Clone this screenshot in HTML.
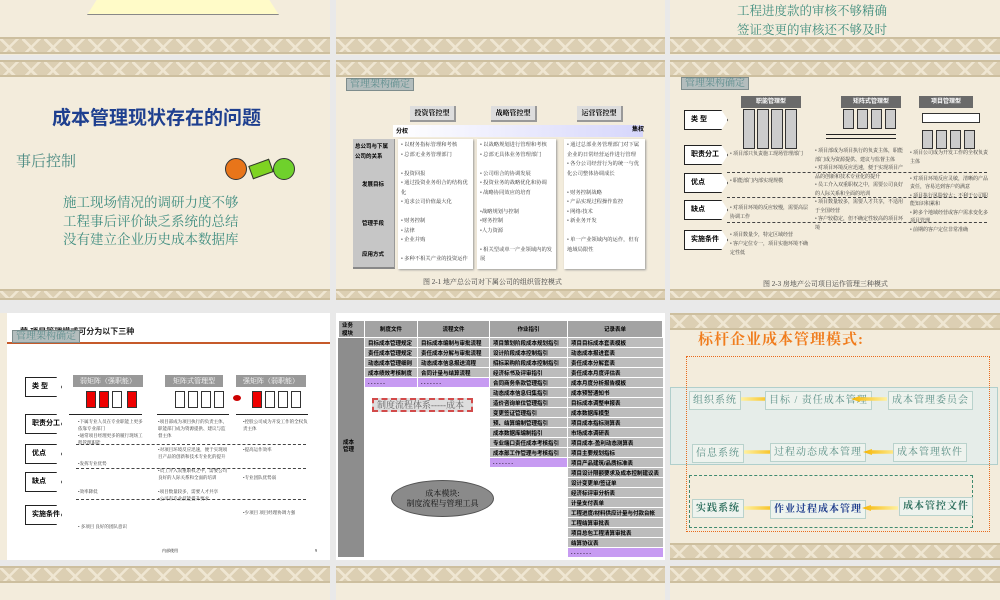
<!DOCTYPE html>
<html><head><meta charset="utf-8">
<style>
*{margin:0;padding:0;box-sizing:border-box}
body{width:1000px;height:600px;position:relative;overflow:hidden;background:#e9e9e9;font-family:"Liberation Serif","Noto Serif CJK SC",serif}
.a{position:absolute}
.bg{background:#f3ecdc}
.band{position:absolute;height:17px;background-color:#dccfb3;
background-image:linear-gradient(135deg,transparent 40%,#efe6d2 40%,#efe6d2 50%,transparent 50%),linear-gradient(45deg,transparent 40%,#efe6d2 40%,#efe6d2 50%,transparent 50%);
background-size:22px 17px;border-top:2px solid #cdbf9f;border-bottom:2px solid #cdbf9f}
.s{font-family:"Liberation Sans","Noto Sans CJK SC",sans-serif}
.lbl{position:absolute;background:#b3bdbd;border:1px solid #7e8c8c;color:#5f8e8e;font-size:10px;line-height:11px;padding:0 3px;white-space:nowrap}
.t7{font-size:6px;line-height:9.5px;color:#333}
.hdr{position:absolute;background:#ddd;border-bottom:2px solid #999;border-right:2px solid #999;font-size:7px;font-weight:bold;text-align:center;line-height:14px}
.arrow{position:absolute;background:#fff;border:1.5px solid #222;font-size:7px;font-weight:bold;line-height:17px;padding-left:6px;width:44px;height:20px;clip-path:polygon(0 0,85% 0,100% 50%,85% 100%,0 100%)}
.dash{position:absolute;border-top:1px dashed #444;height:0}
table{border-collapse:collapse}
.tb td{border:1px solid #fff;font-size:5.5px;font-weight:bold;height:10px;padding:0 3px;white-space:nowrap;font-family:"Liberation Sans","Noto Sans CJK SC",sans-serif}
.g{background:#bcbcbc}.p{background:#c79bf2}.w{background:#fff;border:none!important}
.box{position:absolute;border:1px solid #b9d2cc;background:#eef3ee;color:#5a8f86;font-size:10px;line-height:17px;padding:0 3px;letter-spacing:1px;white-space:nowrap}
.yar{position:absolute;height:6px;width:36px;background:linear-gradient(90deg,#fff1a0,#f5b400);clip-path:polygon(0 20%,75% 20%,75% 0,100% 50%,75% 100%,75% 80%,0 80%)}
.yal{position:absolute;height:6px;width:36px;background:linear-gradient(270deg,#fff1a0,#f5b400);clip-path:polygon(100% 20%,25% 20%,25% 0,0 50%,25% 100%,25% 80%,100% 80%)}
</style></head><body>

<!-- Row 1 -->
<div class="a bg" style="left:0;top:0;width:330px;height:55px"></div>
<div class="a bg" style="left:336px;top:0;width:329px;height:55px"></div>
<div class="a bg" style="left:670px;top:0;width:330px;height:55px"></div>
<div class="a" style="left:87px;top:0;width:192px;height:15px;background:#fffbc8;border-bottom:1px solid #888;clip-path:polygon(5% 0,95% 0,100% 100%,0 100%)"></div>
<div class="a" style="left:737px;top:2px;font-size:12.5px;line-height:19px;color:#3f8d7d">工程进度款的审核不够精确<br>签证变更的审核还不够及时</div>
<div class="band" style="left:0;top:37px;width:330px"></div>
<div class="band" style="left:336px;top:37px;width:329px"></div>
<div class="band" style="left:670px;top:37px;width:330px"></div>

<!-- Row 2 col 1 -->
<div class="a bg" style="left:0;top:60px;width:330px;height:240px"></div>
<div class="band" style="left:0;top:60px;width:330px"></div>
<div class="band" style="left:0;top:289px;width:330px;height:11px"></div>
<div class="a s" style="left:52px;top:103px;font-size:19px;font-weight:bold;color:#1e3f8f">成本管理现状存在的问题</div>
<div class="a" style="left:16px;top:150px;font-size:15px;color:#4a8a82">事后控制</div>
<div class="a" style="left:63px;top:194px;font-size:13.5px;line-height:18.5px;color:#3f8d80">施工现场情况的调研力度不够<br>工程事后评价缺乏系统的总结<br>没有建立企业历史成本数据库</div>
<div class="a" style="left:225px;top:158px;width:22px;height:22px;border-radius:50%;background:#e8751a;border:1px solid #333"></div>
<div class="a" style="left:250px;top:162px;width:22px;height:14px;background:#7ed321;transform:rotate(-20deg);border:1px solid #333"></div>
<div class="a" style="left:273px;top:158px;width:22px;height:22px;border-radius:50%;background:#6fd12c;border:1px solid #333"></div>

<!-- Row 2 col 2 -->
<div class="a bg" style="left:336px;top:60px;width:329px;height:240px"></div>
<div class="band" style="left:336px;top:60px;width:329px"></div>
<div class="band" style="left:336px;top:289px;width:329px;height:11px"></div>
<div class="lbl" style="left:346px;top:78px">管理架构确定</div>
<div class="hdr" style="left:410px;top:106px;width:46px">投资管控型</div>
<div class="hdr" style="left:491px;top:106px;width:46px">战略管控型</div>
<div class="hdr" style="left:577px;top:106px;width:46px">运营管控型</div>
<div class="a" style="left:393px;top:125px;width:250px;height:12px;background:linear-gradient(90deg,#fff,#d6d6fb)"></div>
<div class="a s" style="left:396px;top:126px;font-size:6px;font-weight:bold">分权</div>
<div class="a s" style="left:632px;top:124px;font-size:6px;font-weight:bold">集权</div>
<div class="a" style="left:353px;top:139px;width:42px;height:130px;background:#c6c6c6;border-right:1px solid #999;border-bottom:2px solid #888"></div>
<div class="a s" style="left:355px;top:142px;font-size:5.5px;line-height:10px;font-weight:bold">总公司与下属<br>公司的关系</div>
<div class="a s" style="left:362px;top:180px;font-size:5.5px;font-weight:bold">发展目标</div>
<div class="a s" style="left:362px;top:219px;font-size:5.5px;font-weight:bold">管理手段</div>
<div class="a s" style="left:362px;top:250px;font-size:5.5px;font-weight:bold">应用方式</div>
<div class="a t7" style="left:398px;top:139px;width:75px;height:130px;background:#fff;box-shadow:1px 1px 2px #999;padding:2px 3px;font-size:5.3px">• 以财务指标管理和考核<br>• 总部无业务管理部门<br><br>• 投资回报<br>• 通过投资业务组合的结构优化<br>• 追求公司价值最大化<br><br>• 财务控制<br>• 法律<br>• 企业并购<br><br>• 多种不相关产业的投资运作</div>
<div class="a t7" style="left:477px;top:139px;width:79px;height:130px;background:#fff;box-shadow:1px 1px 2px #999;padding:2px 3px;font-size:5.3px">• 以战略规划进行管理和考核<br>• 总部无具体业务管理部门<br><br>• 公司组合的协调发展<br>• 投资业务的战略优化和协调<br>• 战略协同效应的培育<br><br>•战略规划与控制<br>•财务控制<br>•人力资源<br><br>• 相关型或单一产业领域内的发展</div>
<div class="a t7" style="left:564px;top:139px;width:81px;height:130px;background:#fff;box-shadow:1px 1px 2px #999;padding:2px 3px;font-size:5.3px">• 通过总部业务管理部门对下属企业的日常经营运作进行管理<br>• 各分公司经营行为的统一与优化公司整体协调成长<br><br>• 财务控制战略<br>• 产品实现过程操作监控<br>• 网络/技术<br>• 新业务开发<br><br>• 单一产业领域内的运作，但有地域局限性</div>
<div class="a" style="left:423px;top:277px;font-size:7px;color:#444">图 2-1 地产总公司对下属公司的组织管控模式</div>

<!-- Row 2 col 3 -->
<div class="a bg" style="left:670px;top:60px;width:330px;height:240px"></div>
<div class="band" style="left:670px;top:60px;width:330px"></div>
<div class="band" style="left:670px;top:289px;width:330px;height:11px"></div>
<div class="lbl" style="left:681px;top:77px">管理架构确定</div>
<div class="a s" style="left:741px;top:96px;width:60px;height:12px;background:#6a6a6a;color:#fff;font-size:6px;text-align:center;line-height:12px;font-weight:bold">职能管理型</div>
<div class="a s" style="left:841px;top:96px;width:60px;height:12px;background:#6a6a6a;color:#fff;font-size:6px;text-align:center;line-height:12px;font-weight:bold">矩阵式管理型</div>
<div class="a s" style="left:919px;top:96px;width:54px;height:12px;background:#6a6a6a;color:#fff;font-size:6px;text-align:center;line-height:12px;font-weight:bold">项目管理型</div>
<div class="a" style="left:743px;top:109px;width:12px;height:40px;background:#ccc;border:1px solid #333"></div>
<div class="a" style="left:757px;top:109px;width:12px;height:40px;background:#ccc;border:1px solid #333"></div>
<div class="a" style="left:771px;top:109px;width:12px;height:40px;background:#ccc;border:1px solid #333"></div>
<div class="a" style="left:785px;top:109px;width:12px;height:40px;background:#ccc;border:1px solid #333"></div>
<div class="a" style="left:843px;top:109px;width:11px;height:20px;background:#ccc;border:1px solid #333"></div>
<div class="a" style="left:857px;top:109px;width:11px;height:20px;background:#ccc;border:1px solid #333"></div>
<div class="a" style="left:871px;top:109px;width:11px;height:20px;background:#ccc;border:1px solid #333"></div>
<div class="a" style="left:885px;top:109px;width:11px;height:20px;background:#ccc;border:1px solid #333"></div>
<div class="a" style="left:826px;top:134px;width:70px;border-top:1px solid #222"></div>
<div class="a" style="left:826px;top:138px;width:70px;border-top:1px solid #222"></div>
<div class="a" style="left:922px;top:113px;width:58px;height:10px;background:#fff;border:1px solid #333"></div>
<div class="a" style="left:922px;top:130px;width:11px;height:19px;background:#ccc;border:1px solid #333"></div>
<div class="a" style="left:936px;top:130px;width:11px;height:19px;background:#ccc;border:1px solid #333"></div>
<div class="a" style="left:950px;top:130px;width:11px;height:19px;background:#ccc;border:1px solid #333"></div>
<div class="a" style="left:964px;top:130px;width:11px;height:19px;background:#ccc;border:1px solid #333"></div>
<div class="arrow s" style="left:684px;top:110px">类 型</div>
<div class="arrow s" style="left:684px;top:145px">职责分工</div>
<div class="arrow s" style="left:684px;top:173px">优点</div>
<div class="arrow s" style="left:684px;top:200px">缺点</div>
<div class="arrow s" style="left:684px;top:230px">实施条件</div>
<div class="dash" style="left:727px;top:172px;width:260px"></div>
<div class="dash" style="left:727px;top:197px;width:260px"></div>
<div class="dash" style="left:727px;top:222px;width:260px"></div>
<div class="a t7" style="left:730px;top:150px;width:78px;font-size:5px;line-height:9px">• 项目部只负责施工现场管理部门<br><br><br>• 职能部门内部实现规模<br><br><br>• 对项目环境的反应较慢，需要高层协调工作<br><br>• 项目数量少，特定区域经营<br>• 客户定位专一，项目实施环境不确定性低</div>
<div class="a t7" style="left:815px;top:148px;width:88px;font-size:5px;line-height:8.5px">• 项目部成为项目执行的负责主体，职能部门成为资源提供、建议与监督主体<br>• 对项目环境反应迅速，便于实现项目产品的创新和技术专业化的提升<br>• 员工介入双重职权之中，需要公司良好的人际关系和全面的培训<br>• 项目数量较多，需要人才共享，不适用于全国经营<br>• 客户较稳定，但不确定性较高的项目环境</div>
<div class="a t7" style="left:910px;top:150px;width:78px;font-size:5px;line-height:8.5px">• 项目公司成为开发工作的全权负责主体<br><br>• 对项目环境反应灵敏，清晰的产品责任，容易达到客户的满意<br>• 项目执行风险较大；不利于公司职能知识积累和<br>• 跨多个地域经营或客户需求变化多项目管理<br>• 前期的客户定位非常准确</div>
<div class="a" style="left:763px;top:279px;font-size:7px;color:#444">图 2-3 房地产公司项目运作管理三种模式</div>

<!-- Row 3 col 1 -->
<div class="a bg" style="left:0;top:313px;width:330px;height:247px"></div>
<div class="a" style="left:7px;top:313px;width:323px;height:247px;background:#fff"></div>
<div class="a s" style="left:20px;top:326px;font-size:8px;font-weight:bold;color:#222">营 项目管理模式可分为以下三种</div>
<div class="a" style="left:7px;top:342px;width:323px;height:2px;background:#c65a2a"></div>
<div class="lbl" style="left:12px;top:330px">管理架构确定</div>
<div class="a" style="left:73px;top:375px;width:70px;height:12px;background:#999;color:#fff;font-size:7px;text-align:center;line-height:12px">弱矩阵（强职能）</div>
<div class="a" style="left:165px;top:375px;width:58px;height:12px;background:#999;color:#fff;font-size:7px;text-align:center;line-height:12px">矩阵式管理型</div>
<div class="a" style="left:236px;top:375px;width:70px;height:12px;background:#999;color:#fff;font-size:7px;text-align:center;line-height:12px">强矩阵（弱职能）</div>
<div class="a" style="left:86px;top:391px;width:10px;height:17px;background:#e00;border:1px solid #333"></div>
<div class="a" style="left:99px;top:391px;width:10px;height:17px;background:#e00;border:1px solid #333"></div>
<div class="a" style="left:112px;top:391px;width:10px;height:17px;background:#fff;border:1px solid #333"></div>
<div class="a" style="left:127px;top:391px;width:10px;height:17px;background:#e00;border:1px solid #333"></div>
<div class="a" style="left:175px;top:391px;width:10px;height:17px;background:#fff;border:1px solid #333"></div>
<div class="a" style="left:188px;top:391px;width:10px;height:17px;background:#fff;border:1px solid #333"></div>
<div class="a" style="left:201px;top:391px;width:10px;height:17px;background:#fff;border:1px solid #333"></div>
<div class="a" style="left:214px;top:391px;width:10px;height:17px;background:#fff;border:1px solid #333"></div>
<div class="a" style="left:252px;top:391px;width:10px;height:17px;background:#e00;border:1px solid #333"></div>
<div class="a" style="left:265px;top:391px;width:10px;height:17px;background:#fff;border:1px solid #333"></div>
<div class="a" style="left:278px;top:391px;width:10px;height:17px;background:#fff;border:1px solid #333"></div>
<div class="a" style="left:291px;top:391px;width:10px;height:17px;background:#fff;border:1px solid #333"></div>
<div class="a" style="left:69px;top:414px;width:73px;border-top:1px solid #222"></div>
<div class="a" style="left:157px;top:414px;width:72px;border-top:1px solid #222"></div>
<div class="a" style="left:236px;top:414px;width:72px;border-top:1px solid #222"></div>
<div class="a" style="left:233px;top:395px;width:8px;height:6px;border-radius:50%;background:#c00"></div>
<div class="arrow s" style="left:25px;top:377px;width:37px">类 型</div>
<div class="arrow s" style="left:25px;top:414px;width:37px">职责分工</div>
<div class="arrow s" style="left:25px;top:444px;width:37px">优点</div>
<div class="arrow s" style="left:25px;top:472px;width:37px">缺点</div>
<div class="arrow s" style="left:25px;top:505px;width:37px">实施条件</div>
<div class="dash" style="left:76px;top:444px;width:230px"></div>
<div class="dash" style="left:76px;top:468px;width:230px"></div>
<div class="dash" style="left:76px;top:499px;width:230px"></div>
<div class="a t7" style="left:78px;top:418px;width:66px;font-size:4.5px;line-height:7px">•下属专业人员在专业职能上更多依靠专业部门<br>•通常项目经理更多的履行现场工程管理职能<br><br><br>•发挥专业优势<br><br><br><br>•效率降低<br><br><br><br><br>• 多项目 良好的团队意识</div>
<div class="a t7" style="left:158px;top:418px;width:70px;font-size:4.5px;line-height:7px">•项目部成为项目执行的负责主体，职能部门成为资源提供、建议与监督主体<br><br>•对项目环境反应迅速，便于实现项目产品的创新和技术专业化的提升<br><br>•员工介入双重职权之中，需要公司良好的人际关系和全面的培训<br><br>•项目数量较多，需要人才共享<br>•公司有专业技能提升要求</div>
<div class="a t7" style="left:243px;top:418px;width:66px;font-size:4.5px;line-height:7px">•控股公司成为开发工作的全权负责主体<br><br><br>•提高运作效率<br><br><br><br>•专业团队优势弱<br><br><br><br><br>•少项目 项目经理协调力强</div>
<div class="a" style="left:162px;top:548px;font-size:4px">内部使用</div>
<div class="a" style="left:315px;top:548px;font-size:4px">9</div>

<!-- Row 3 col 2 -->
<div class="a" style="left:336px;top:313px;width:329px;height:247px;background:#fff"></div>
<table class="tb a" style="left:338px;top:320px;width:325px">
<tr style="background:#a3a3a3"><td style="width:26px;height:17px">业务<br>模块</td><td style="width:53px;text-align:center">制度文件</td><td style="width:72px;text-align:center">流程文件</td><td style="width:78px;text-align:center">作业指引</td><td style="text-align:center">记录表单</td></tr>
</table>
<div class="a" style="left:338px;top:338px;width:26px;height:219px;background:#8d8d8d"></div>
<div class="a s" style="left:343px;top:440px;font-size:5.5px;font-weight:bold;line-height:7px">成本<br>管理</div>
<table class="tb a" style="left:364px;top:337px">
<tr><td class="g" style="width:53px">目标成本管理规定</td><td class="g" style="width:72px">目标成本编制与审批流程</td><td class="g" style="width:78px">项目策划阶段成本规划指引</td><td class="g" style="width:96px">项目目标成本套表模板</td></tr>
<tr><td class="g">责任成本管理规定</td><td class="g">责任成本分解与审批流程</td><td class="g">设计阶段成本控制指引</td><td class="g">动态成本报进套表</td></tr>
<tr><td class="g">动态成本管理细则</td><td class="g">动态成本信息报送流程</td><td class="g">招标采购阶段成本控制指引</td><td class="g">责任成本分解套表</td></tr>
<tr><td class="g">成本绩效考核制度</td><td class="g">合同计量与结算流程</td><td class="g">经济标书及评审指引</td><td class="g">责任成本月度评估表</td></tr>
<tr><td class="p">. . . . . .</td><td class="p">. . . . . . .</td><td class="g">合同商务条款管理指引</td><td class="g">成本月度分析报告模板</td></tr>
<tr><td class="w"></td><td class="w"></td><td class="g">动态成本信息归集指引</td><td class="g">成本预警通知书</td></tr>
<tr><td class="w"></td><td class="w"></td><td class="g">造价咨询单位管理指引</td><td class="g">目标成本调整申报表</td></tr>
<tr><td class="w"></td><td class="w"></td><td class="g">变更签证管理指引</td><td class="g">成本数据库模型</td></tr>
<tr><td class="w"></td><td class="w"></td><td class="g">预、结算编制管理指引</td><td class="g">项目成本指标测算表</td></tr>
<tr><td class="w"></td><td class="w"></td><td class="g">成本数据库编制指引</td><td class="g">市场成本调研表</td></tr>
<tr><td class="w"></td><td class="w"></td><td class="g">专业端口责任成本考核指引</td><td class="g">项目成本-盈利动态测算表</td></tr>
<tr><td class="w"></td><td class="w"></td><td class="g">成本部工作管理与考核指引</td><td class="g">项目主要规划指标</td></tr>
<tr><td class="w"></td><td class="w"></td><td class="p">. . . . . . .</td><td class="g">项目产品建筑/品质标准表</td></tr>
<tr><td class="w"></td><td class="w"></td><td class="w"></td><td class="g">项目设计限额要求及成本控制建议表</td></tr>
<tr><td class="w"></td><td class="w"></td><td class="w"></td><td class="g">设计变更单/签证单</td></tr>
<tr><td class="w"></td><td class="w"></td><td class="w"></td><td class="g">经济标评审分析表</td></tr>
<tr><td class="w"></td><td class="w"></td><td class="w"></td><td class="g">计量支付表单</td></tr>
<tr><td class="w"></td><td class="w"></td><td class="w"></td><td class="g">工程进度/材料供应计量与付款台帐</td></tr>
<tr><td class="w"></td><td class="w"></td><td class="w"></td><td class="g">工程结算审批表</td></tr>
<tr><td class="w"></td><td class="w"></td><td class="w"></td><td class="g">项目总包工程清算审批表</td></tr>
<tr><td class="w"></td><td class="w"></td><td class="w"></td><td class="g">结算协议表</td></tr>
<tr><td class="w"></td><td class="w"></td><td class="w"></td><td class="p">. . . . . . .</td></tr>
</table>
<div class="a" style="left:372px;top:398px;width:101px;height:14px;background:#ddd;border:2px dashed #d24a4a;font-size:9px;line-height:10px;color:#666;padding-left:3px">制度流程体系-----成本</div>
<div class="a" style="left:391px;top:480px;width:103px;height:37px;border-radius:50%;background:#8a8a8a;border:1px solid #555;font-size:8px;line-height:10px;text-align:center;padding-top:8px;color:#111">成本模块:<br>制度流程与管理工具</div>

<!-- Row 3 col 3 -->
<div class="a bg" style="left:670px;top:313px;width:330px;height:247px"></div>
<div class="band" style="left:670px;top:313px;width:330px"></div>
<div class="band" style="left:670px;top:543px;width:330px"></div>
<div class="a" style="left:698px;top:328px;font-size:15px;font-weight:bold;color:#f07d1e;letter-spacing:1px">标杆企业成本管理模式:</div>
<div class="a" style="left:670px;top:387px;width:328px;height:78px;background:rgba(225,238,238,.75);border:1px solid #b0cfcc"></div>
<div class="a" style="left:686px;top:356px;width:304px;height:176px;border:1px dotted #e86a1c"></div>
<div class="a" style="left:689px;top:475px;width:284px;height:53px;border:1.5px dashed #3f8a6f"></div>
<div class="box" style="left:689px;top:391px">组织系统</div>
<div class="yar" style="left:741px;top:396px"></div>
<div class="box" style="left:765px;top:391px">目标 / 责任成本管理</div>
<div class="yal" style="left:851px;top:396px"></div>
<div class="box" style="left:888px;top:391px">成本管理委员会</div>
<div class="box" style="left:692px;top:444px">信息系统</div>
<div class="yar" style="left:744px;top:449px"></div>
<div class="box" style="left:770px;top:443px">过程动态成本管理</div>
<div class="yal" style="left:863px;top:449px"></div>
<div class="box" style="left:893px;top:443px">成本管理软件</div>
<div class="box" style="left:692px;top:499px;color:#2d6f5d;font-weight:bold">实践系统</div>
<div class="yar" style="left:744px;top:505px"></div>
<div class="box" style="left:770px;top:500px;color:#1f3d8c;font-weight:bold">作业过程成本管理</div>
<div class="yal" style="left:862px;top:505px"></div>
<div class="box" style="left:899px;top:497px;color:#2d6f5d;font-weight:bold">成本管控文件</div>

<!-- Row 4 -->
<div class="a bg" style="left:0;top:566px;width:330px;height:34px"></div>
<div class="a bg" style="left:336px;top:566px;width:329px;height:34px"></div>
<div class="a bg" style="left:670px;top:566px;width:330px;height:34px"></div>
<div class="band" style="left:0;top:566px;width:330px"></div>
<div class="band" style="left:336px;top:566px;width:329px"></div>
<div class="band" style="left:670px;top:566px;width:330px"></div>
</body></html>
